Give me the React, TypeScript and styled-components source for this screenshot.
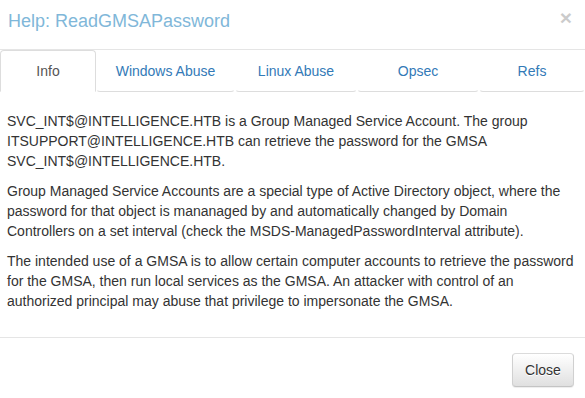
import React from "react";
import styled, { createGlobalStyle } from "styled-components";

const Global = createGlobalStyle`
  html, body { margin: 0; padding: 0; background: #fff; }
  body {
    font-family: "Liberation Sans", Arial, Helvetica, sans-serif;
    font-size: 14px;
    line-height: 1.42857;
    color: #333;
  }
  * { box-sizing: border-box; }
`;

const Modal = styled.div`
  width: 585px;
  height: 398px;
  overflow: hidden;
  background: #fff;
  display: flex;
  flex-direction: column;
`;

const Header = styled.div`
  display: flex;
  align-items: flex-start;
  justify-content: space-between;
  padding: 8px 13px 15px 8px;
  border-bottom: 1px solid #e5e5e5;
  height: 50px;
  flex: none;
`;

const Title = styled.h4`
  margin: 0;
  font-size: 18px;
  font-weight: 400;
  line-height: 26px;
  color: #80b7d9;
`;

const CloseX = styled.button`
  border: 0;
  background: transparent;
  padding: 0;
  margin-top: -1px;
  font-family: "Liberation Sans", Arial, sans-serif;
  font-size: 21px;
  font-weight: 700;
  line-height: 21px;
  color: #000;
  opacity: 0.2;
  cursor: pointer;
`;

const Tabs = styled.ul`
  list-style: none;
  margin: 0;
  padding: 0;
  display: flex;
  flex: none;
`;

const TabItem = styled.li<{ $w: number }>`
  width: ${(p) => (p.$w ? `${p.$w}px` : "auto")};
  flex: ${(p) => (p.$w ? "none" : "1")};
  text-align: center;
`;

const TabLink = styled.a<{ $active?: boolean }>`
  display: block;
  padding: 10px 15px;
  line-height: 20px;
  font-size: 14px;
  text-decoration: none;
  border-radius: ${(p) => (p.$active ? "4px 4px 0 0" : "4px")};
  border: 1px solid ${(p) => (p.$active ? "#ddd" : "transparent")};
  border-bottom: 1px solid ${(p) => (p.$active ? "#fff" : "#ddd")};
  color: ${(p) => (p.$active ? "#555" : "#337ab7")};
  cursor: pointer;
`;

const Body = styled.div`
  padding: 20px 8px 15px 7px;
  flex: none;
`;

const Para = styled.p`
  margin: 0 0 10px;
`;

const Footer = styled.div`
  border-top: 1px solid #e5e5e5;
  padding: 15px 11px 15px 15px;
  display: flex;
  justify-content: flex-end;
  flex: none;
`;

const Button = styled.button`
  font-family: "Liberation Sans", Arial, sans-serif;
  font-size: 14px;
  line-height: 20px;
  padding: 6px 12px;
  height: 34px;
  width: 62px;
  color: #333;
  border: 1px solid #ccc;
  border-color: #dbdbdb #d0d0d0 #c4c4c4;
  border-radius: 4px;
  background-image: linear-gradient(to bottom, #fff 0, #e0e0e0 100%);
  text-shadow: 0 1px 0 #fff;
  box-shadow: inset 0 1px 0 rgba(255, 255, 255, 0.15), 0 1px 1px rgba(0, 0, 0, 0.075);
  cursor: pointer;
`;

const tabs = [
  { label: "Info", w: 96, active: true },
  { label: "Windows Abuse", w: 139 },
  { label: "Linux Abuse", w: 122 },
  { label: "Opsec", w: 122 },
  { label: "Refs", w: 0 },
];

export default function App() {
  return (
    <>
      <Global />
      <Modal>
        <Header>
          <Title>Help: ReadGMSAPassword</Title>
          <CloseX aria-label="Close">×</CloseX>
        </Header>
        <Tabs>
          {tabs.map((t) => (
            <TabItem key={t.label} $w={t.w}>
              <TabLink $active={t.active}>{t.label}</TabLink>
            </TabItem>
          ))}
        </Tabs>
        <Body>
          <Para>
            SVC_INT$@INTELLIGENCE.HTB is a Group Managed Service Account. The group
            ITSUPPORT@INTELLIGENCE.HTB can retrieve the password for the GMSA
            SVC_INT$@INTELLIGENCE.HTB.
          </Para>
          <Para>
            Group Managed Service Accounts are a special type of Active Directory object,
            where the password for that object is mananaged by and automatically changed by
            Domain Controllers on a set interval (check the MSDS-ManagedPasswordInterval
            attribute).
          </Para>
          <Para>
            The intended use of a GMSA is to allow certain computer accounts to retrieve the
            password for the GMSA, then run local services as the GMSA. An attacker with
            control of an authorized principal may abuse that privilege to impersonate the
            GMSA.
          </Para>
        </Body>
        <Footer>
          <Button>Close</Button>
        </Footer>
      </Modal>
    </>
  );
}
